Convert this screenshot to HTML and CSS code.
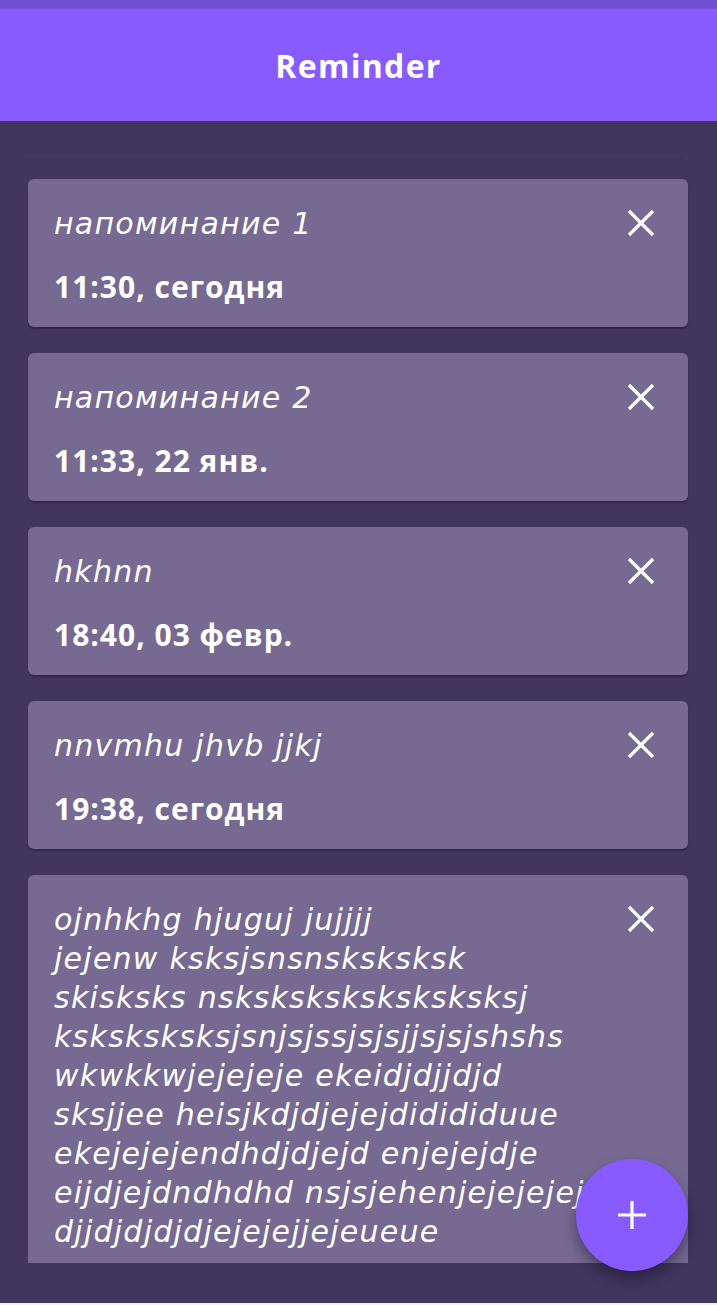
FILE: index.html
```html
<!DOCTYPE html>
<html lang="ru">
<head>
<meta charset="utf-8">
<title>Reminder</title>
<link rel="stylesheet" href="styles.css">
</head>
<body>
<div class="screen">
  <div class="status-bar"></div>
  <header class="app-bar"><h1 class="app-title">Reminder</h1></header>
  <main class="list">
    <div class="list-edge"></div>
    <section class="card">
      <div class="card-text">
        <p class="card-title">напоминание 1</p>
        <p class="card-date">11:30, сегодня</p>
      </div>
      <button class="close" aria-label="Удалить"><svg viewBox="0 0 28 28"><path d="M2 2L26 26M26 2L2 26"/></svg></button>
    </section>
    <section class="card">
      <div class="card-text">
        <p class="card-title">напоминание 2</p>
        <p class="card-date">11:33, 22 янв.</p>
      </div>
      <button class="close" aria-label="Удалить"><svg viewBox="0 0 28 28"><path d="M2 2L26 26M26 2L2 26"/></svg></button>
    </section>
    <section class="card">
      <div class="card-text">
        <p class="card-title">hkhnn</p>
        <p class="card-date">18:40, 03 февр.</p>
      </div>
      <button class="close" aria-label="Удалить"><svg viewBox="0 0 28 28"><path d="M2 2L26 26M26 2L2 26"/></svg></button>
    </section>
    <section class="card">
      <div class="card-text">
        <p class="card-title">nnvmhu jhvb jjkj</p>
        <p class="card-date">19:38, сегодня</p>
      </div>
      <button class="close" aria-label="Удалить"><svg viewBox="0 0 28 28"><path d="M2 2L26 26M26 2L2 26"/></svg></button>
    </section>
    <section class="card">
      <div class="card-text">
        <p class="card-title">ojnhkhg hjuguj jujjjj<br>jejenw ksksjsnsnsksksksk<br>skisksks nsksksksksksksksksj<br>ksksksksksjsnjsjssjsjsjjsjsjshshs<br>wkwkkwjejejeje ekeidjdjjdjd<br>sksjjee heisjkdjdjejejdidididuue<br>ekejejejendhdjdjejd enjejejdje<br>eijdjejdndhdhd nsjsjehenjejejejejej<br>djjdjdjdjdjejejejjejeueue</p>
      </div>
      <button class="close" aria-label="Удалить"><svg viewBox="0 0 28 28"><path d="M2 2L26 26M26 2L2 26"/></svg></button>
    </section>
  </main>
  <div class="bottom-space"></div>
  <div class="nav-line"></div>
  <button class="fab" aria-label="Добавить"><svg viewBox="0 0 28 28"><path d="M14 0V28M0 14H28"/></svg></button>
</div>
</body>
</html>
```
FILE: styles.css
```css
* { box-sizing: border-box; }
html, body { margin: 0; padding: 0; }
body {
  background: #40365e;
  font-family: "Open Sans", "DejaVu Sans", sans-serif;
  color: #ffffff;
}
.screen {
  position: relative;
  width: 717px;
  height: 1305px;
  overflow: hidden;
  display: flex;
  flex-direction: column;
  background: #40365e;
}
.status-bar {
  height: 9px;
  background: #6f51cf;
  flex: none;
}
.app-bar {
  height: 112px;
  flex: none;
  background: #875bff;
  display: flex;
  align-items: center;
  justify-content: center;
}
.app-title {
  margin: 0;
  font-size: 32px;
  font-weight: 700;
  color: #ffffff;
  letter-spacing: 1.3px;
}
.list {
  flex: 1;
  overflow: hidden;
  padding: 34px 29px 0 28px;
  display: flex;
  flex-direction: column;
  gap: 26px;
}
.list-edge {
  height: 3px;
  flex: none;
  margin-bottom: -5px;
  border-top: 1px solid rgba(255,255,255,0.025);
  border-left: 1px solid rgba(255,255,255,0.07);
  border-right: 1px solid rgba(255,255,255,0.07);
  border-radius: 6px 6px 0 0;
}
.card {
  flex: none;
  background: #766a93;
  border-radius: 6px;
  box-shadow: 0 2px 1px rgba(30, 20, 50, 0.45);
  display: flex;
  align-items: flex-start;
  padding: 25px 33px 21px 26px;
}
.card:last-child {
  border-radius: 6px 6px 0 0;
  box-shadow: none;
}
.card-text {
  flex: 1;
  min-width: 0;
}
.card-title {
  margin: 0;
  font-family: "DejaVu Sans", sans-serif;
  font-size: 30px;
  line-height: 39px;
  font-style: italic;
  font-weight: 400;
  letter-spacing: 1.25px;
  white-space: nowrap;
}
.card-date {
  margin: 24px 0 0;
  font-size: 30px;
  line-height: 39px;
  font-weight: 700;
  letter-spacing: 1px;
}
.close {
  flex: none;
  width: 28px;
  height: 28px;
  margin-top: 5px;
  padding: 0;
  border: 0;
  background: none;
  display: block;
}
.close svg, .fab svg {
  display: block;
  width: 100%;
  height: 100%;
}
.close path, .fab path {
  stroke: #ffffff;
  stroke-width: 3.2;
  fill: none;
}
.bottom-space {
  height: 40px;
  flex: none;
}
.nav-line {
  height: 2px;
  flex: none;
  background: #f2f2f2;
}
.fab {
  position: absolute;
  left: 576px;
  top: 1159px;
  width: 112px;
  height: 112px;
  border-radius: 50%;
  border: 0;
  padding: 42px;
  background: #875bff;
  box-shadow: 0 8px 14px rgba(20, 10, 40, 0.45);
}
```
